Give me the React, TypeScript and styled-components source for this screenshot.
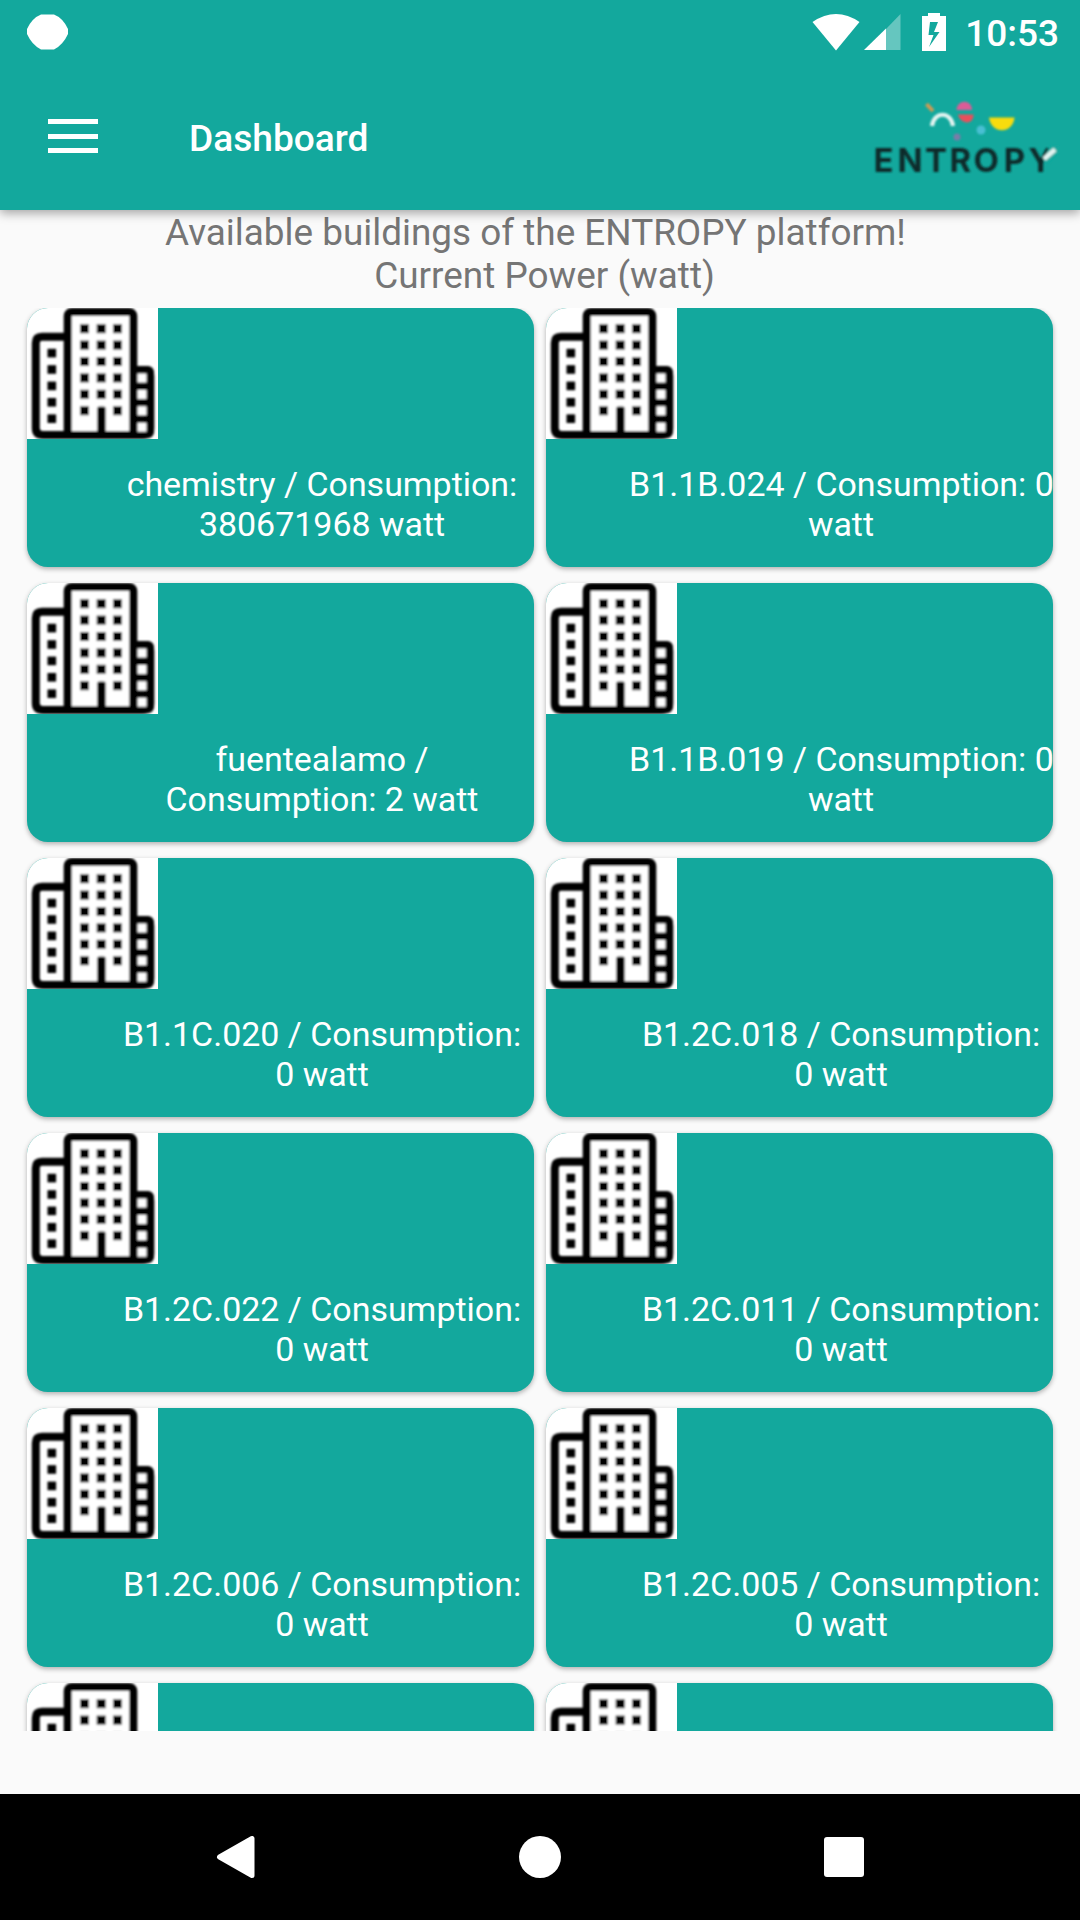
import React from "react";
import styled, { createGlobalStyle } from "styled-components";

const TEAL = "#13a89d";

const GlobalStyle = createGlobalStyle`
  * { box-sizing: border-box; }
  body { margin: 0; background: #fafafa; font-family: Roboto, "Noto Sans", sans-serif; }
`;

const Screen = styled.div`
  width: 1080px;
  height: 1920px;
  display: flex;
  flex-direction: column;
  overflow: hidden;
  background: #fafafa;
`;

const Header = styled.header`
  flex: none;
  height: 210px;
  background: ${TEAL};
  color: #fff;
  box-shadow: 0 3px 10px rgba(0, 0, 0, 0.36);
  z-index: 1;
`;

const StatusBar = styled.div`
  height: 63px;
  display: flex;
  align-items: center;
  justify-content: space-between;
  padding: 0 21px 0 27px;
`;

const StatusIcons = styled.div`
  display: flex;
  align-items: center;
`;

const Clock = styled.span`
  margin-left: 18px;
  font-size: 37px;
  font-weight: 500;
  line-height: 43px;
  padding-top: 4px;
`;

const Toolbar = styled.div`
  height: 147px;
  display: flex;
  align-items: center;
  padding: 0 20px 0 48px;
`;

const MenuButton = styled.button`
  width: 50px;
  height: 34px;
  margin-top: -1px;
  padding: 0;
  border: 0;
  background: none;
  display: flex;
  flex-direction: column;
  justify-content: space-between;
`;

const MenuBar = styled.span`
  width: 50px;
  height: 5px;
  background: #fff;
`;

const Title = styled.h1`
  flex: 1;
  margin: 4px 0 0 91px;
  font-size: 37.1px;
  font-weight: 500;
  line-height: 43px;
`;

const Intro = styled.p`
  flex: none;
  height: 98px;
  margin: 0;
  padding-top: 1px;
  text-align: center;
  white-space: pre;
  font-size: 36.9px;
  line-height: 43px;
  color: #757575;
`;

const Viewport = styled.main`
  flex: none;
  height: 1423px;
  overflow: hidden;
`;

const Grid = styled.div`
  display: grid;
  grid-template-columns: 507px 507px;
  grid-auto-rows: 259px;
  gap: 16px 12px;
  padding: 0 27px;
`;

const Card = styled.article`
  display: flex;
  flex-direction: column;
  border-radius: 21px;
  overflow: hidden;
  background: ${TEAL};
  box-shadow: 0 2px 5px rgba(0, 0, 0, 0.3);
`;

const Reading = styled.div`
  margin: 26px 0 0 83px;
  text-align: center;
  white-space: pre;
  color: #fff;
  font-size: 33.95px;
  line-height: 40px;
`;

const Footer = styled.nav`
  flex: none;
  height: 126px;
  margin-top: 63px;
  display: flex;
  align-items: center;
  justify-content: space-between;
  padding: 0 216px;
  background: #000;
`;

const rowsOf = (n: number, start: number) =>
  Array.from({ length: n }, (_, i) => start + i * 16.4);

const Building = () => (
  <svg width="131" height="131" viewBox="0 0 131 131" style={{ display: "block" }}>
    <defs>
      <filter id="soft" x="-5%" y="-5%" width="110%" height="110%">
        <feGaussianBlur stdDeviation="0.8" />
      </filter>
    </defs>
    <rect width="131" height="131" fill="#fff" />
    <g filter="url(#soft)">
      <path d="M37 28.800H15Q8.800 28.800 8.800 35V120Q8.800 127 16 127H116Q123.300 127 123.300 120V68Q123.300 62 117 62H108" fill="none" stroke="#000" strokeWidth="8" />
      <rect x="40.700" y="4" width="65.600" height="123" rx="4" fill="#fff" stroke="#000" strokeWidth="8" />
      <rect x="106.500" y="58" width="20.500" height="72" rx="6" />
      <rect x="70.200" y="98.500" width="8.500" height="29" rx="2" />
      {rowsOf(5, 40.8).map((y) => <rect key={y} x="20.500" y={y} width="8.600" height="8.600" />)}
      {rowsOf(6, 16.2).map((y, i) => (
        <g key={y}>
          <rect x="53" y={y} width="9" height="9" />
          {i < 5 && <rect x="69.700" y={y} width="9" height="9" />}
          <rect x="86" y={y} width="9" height="9" />
        </g>
      ))}
      {rowsOf(4, 65.5).map((y) => <rect key={y} x="110.500" y={y} width="9" height="9" fill="#fff" />)}
    </g>
  </svg>
);

const Logo = () => (
  <svg width="190" height="85" viewBox="870 95 190 85" style={{ marginTop: 2 }}>
    <defs>
      <filter id="logoSoft" x="-5%" y="-5%" width="110%" height="110%">
        <feGaussianBlur stdDeviation="0.8" />
      </filter>
    </defs>
    <g filter="url(#logoSoft)">
      <text transform="translate(870 0) scale(1.03 1)" x="3.500 26.800 53.500 77.200 100.500 129.800 154" y="171.800" fontFamily="Inter, sans-serif" fontWeight="650" fontSize="32" fill="#102a29">ENTROPY</text>
      <path d="M1043 160L1050 146L1060 146L1060 152L1048 163Z" fill={TEAL} />
      <path d="M1044 159L1055 149.500" stroke="#e4f4f1" strokeWidth="4.500" />
      <path d="M926.500 104L933 111" stroke="#d09a52" strokeWidth="4" />
      <path d="M932 126C934 111 951 111 953 126" fill="none" stroke="#e4f4f1" strokeWidth="4.200" />
      <path d="M956.500 110C957 99 972 99 972 110Z" fill="#dc5c97" />
      <path d="M958 114.500H973.500C973.500 126 960 124 958 114.500Z" fill="#e8505b" />
      <path d="M989 117.500H1014.500C1013 134.500 991 134.500 989 117.500Z" fill="#f8dc0c" />
      <circle cx="981" cy="130" r="4.500" fill="#49bfd3" />
      <circle cx="957" cy="137" r="3.500" fill="#7a7ba8" />
    </g>
  </svg>
);

const buildings: [string, string][] = [
  ["chemistry / Consumption:", "380671968 watt"],
  ["B1.1B.024 / Consumption: 0", "watt"],
  ["fuentealamo /", "Consumption: 2 watt"],
  ["B1.1B.019 / Consumption: 0", "watt"],
  ["B1.1C.020 / Consumption:", "0 watt"],
  ["B1.2C.018 / Consumption:", "0 watt"],
  ["B1.2C.022 / Consumption:", "0 watt"],
  ["B1.2C.011 / Consumption:", "0 watt"],
  ["B1.2C.006 / Consumption:", "0 watt"],
  ["B1.2C.005 / Consumption:", "0 watt"],
  ["", ""],
  ["", ""],
];

export default function App() {
  return (
    <>
      <GlobalStyle />
      <Screen>
        <Header>
          <StatusBar>
            <svg width="41" height="36" viewBox="0 0 41 36">
              <path d="M14 .5H27Q36 4 41 15V20Q36 31 27 35.500H14Q5 31 0 20V15Q5 4 14 .5Z" fill="#fff" />
            </svg>
            <StatusIcons>
              <svg width="135" height="38" viewBox="812 12 135 38">
                <path d="M812.500 21Q836 5 859.500 21L836 49.500Z" fill="#fff" />
                <path d="M900.500 13V49H886V28Z" fill="#fff" fillOpacity=".35" />
                <path d="M864 49L886 27.500V49Z" fill="#fff" />
                <path fillRule="evenodd" d="M928 12H940V15H946V50H922V15H928ZM930 21L928.500 34H933.500L929 46L939.500 31H934L938 21Z" fill="#fff" />
              </svg>
              <Clock>10:53</Clock>
            </StatusIcons>
          </StatusBar>
          <Toolbar>
            <MenuButton aria-label="Menu">
              <MenuBar />
              <MenuBar />
              <MenuBar />
            </MenuButton>
            <Title>Dashboard</Title>
            <Logo />
          </Toolbar>
        </Header>
        <Intro>{"Available buildings of the ENTROPY platform! \n Current Power (watt)"}</Intro>
        <Viewport>
          <Grid>
            {buildings.map(([first, second], i) => (
              <Card key={i}>
                <Building />
                <Reading>{first}{"\n"}{second}</Reading>
              </Card>
            ))}
          </Grid>
        </Viewport>
        <Footer>
          <svg width="40" height="42" viewBox="0 0 40 42">
            <path d="M3.500 21L36 2.500V39.500Z" fill="#fff" stroke="#fff" strokeWidth="5" strokeLinejoin="round" />
          </svg>
          <svg width="42" height="42" viewBox="0 0 42 42"><circle cx="21" cy="21" r="21" fill="#fff" /></svg>
          <svg width="40" height="40" viewBox="0 0 40 40"><rect width="40" height="40" rx="3" fill="#fff" /></svg>
        </Footer>
      </Screen>
    </>
  );
}
